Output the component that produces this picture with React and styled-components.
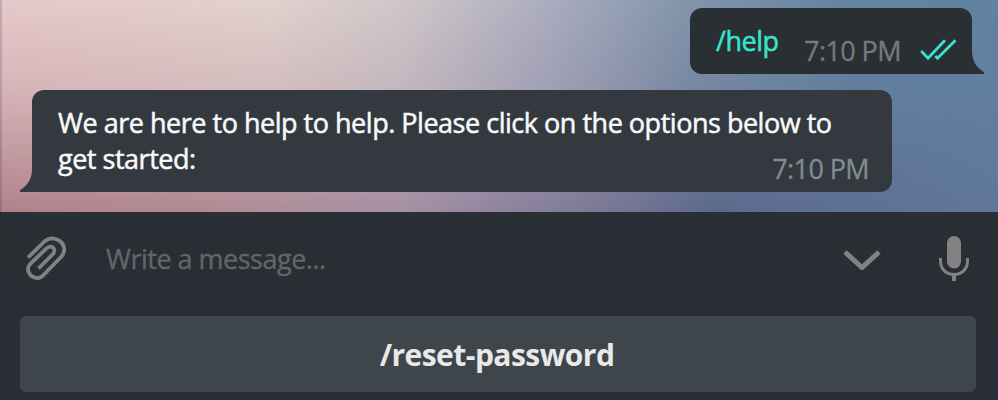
import React from "react";
import styled, { createGlobalStyle } from "styled-components";

const GlobalStyle = createGlobalStyle`
  * { box-sizing: border-box; }
  body {
    margin: 0;
    overflow: hidden;
    background: #292e35;
    font-family: "Open Sans", "Noto Sans", sans-serif;
  }
`;

const Window = styled.main`
  position: relative;
  width: 998px;
  height: 400px;
  display: flex;
  flex-direction: column;
  overflow: hidden;
  &::after {
    content: "";
    position: absolute;
    inset: 0 auto 0 0;
    width: 2px;
    background: rgba(30, 35, 35, 0.17);
  }
`;

const Conversation = styled.section`
  position: relative;
  isolation: isolate;
  height: 212px;
  padding: 8px 26px 0 32px;
  display: flex;
  flex-direction: column;
  gap: 16px;
  border-bottom: 2px solid rgba(50, 60, 85, 0.14);
  background: linear-gradient(90deg, #e7c9cb 0, #e2d2ce 270px, #d0c7c9 400px, #abadbf 550px, #8496ac 680px, #6484a2 850px, #6283a0 998px) border-box;
  &::before {
    content: "";
    position: absolute;
    inset: 0 0 -2px;
    z-index: -1;
    background: linear-gradient(90deg, #b0828a 0, #b08993 220px, #a58fa3 400px, #807b99 570px, #747392 630px, #5c698c 710px, #60779a 998px);
    mask-image: linear-gradient(180deg, transparent 0, rgba(0, 0, 0, 0.27) 40%, #000 100%);
  }
`;

const Bubble = styled.article`
  position: relative;
  display: flex;
  align-self: ${({ $sent }) => ($sent ? "flex-end" : "flex-start")};
  width: ${({ $sent }) => ($sent ? 282 : 860)}px;
  height: ${({ $sent }) => ($sent ? 66 : 102)}px;
  padding: ${({ $sent }) => ($sent ? "15px 16px 0 26px" : "15px 23px 0 26px")};
  border-radius: ${({ $sent }) => ($sent ? "12px 12px 0 12px" : "12px 12px 12px 0")};
  background: ${({ $sent }) => ($sent ? "#2a2f33" : "#343940")};
  color: ${({ $sent }) => ($sent ? "#36e5cc" : "#f8f9fa")};
`;

const Tail = styled.svg`
  position: absolute;
  bottom: 0;
  ${({ $sent }) => ($sent ? "right: -12px;" : "left: -12px; transform: scaleX(-1);")}
  width: 13px;
  height: 22px;
  fill: ${({ $sent }) => ($sent ? "#2a2f33" : "#343940")};
`;

const MessageText = styled.p`
  flex: ${({ $grow }) => ($grow ? 1 : "none")};
  margin: 0;
  font-size: 27px;
  line-height: 36px;
  letter-spacing: -0.48px;
  white-space: nowrap;
  -webkit-text-stroke: 0.5px currentColor;
`;

const Time = styled.time`
  align-self: flex-start;
  margin: ${({ $sent }) => ($sent ? "10px 0 0 25.5px" : "46px 0 0")};
  color: ${({ $sent }) => ($sent ? "#727b82" : "#818c93")};
  font-size: 27px;
  line-height: 36px;
  letter-spacing: -0.6px;
  white-space: nowrap;
  -webkit-text-stroke: 0.3px currentColor;
`;

const ReadMark = styled.svg`
  width: 37px;
  height: 22px;
  margin: 16px -1px 0 auto;
  fill: none;
  stroke: #36e5cc;
  stroke-width: 2.8;
`;

const Composer = styled.footer`
  height: 188px;
  padding: 0 22px 0 20px;
  background: linear-gradient(#292f34, #292d36);
`;

const InputRow = styled.div`
  height: 104px;
  padding: 0 6px 10px 6px;
  display: flex;
  align-items: center;
  color: #828282;
`;

const Placeholder = styled.div`
  flex: 1;
  margin: 0 0 0 38px;
  color: #636669;
  font-size: 27px;
  line-height: 36px;
  letter-spacing: -0.5px;
  -webkit-text-stroke: 0.3px currentColor;
`;

const Icon = styled.svg`
  flex: none;
  fill: none;
  stroke: currentColor;
  margin-right: ${({ $gap }) => $gap || 0}px;
`;

const CommandButton = styled.button`
  display: flex;
  align-items: center;
  justify-content: center;
  width: 956px;
  height: 76px;
  padding: 2px 2px 0 0;
  border: 0;
  border-radius: 6px;
  background: #3e454b;
  color: #e9e9e9;
  font: 700 30px/40px "Open Sans", "Noto Sans", sans-serif;
  letter-spacing: -0.54px;
`;

function BubbleTail({ sent }) {
  return (
    <Tail $sent={sent} viewBox="0 0 13 22" aria-hidden="true">
      <path d="M0 0H1C1.3 8 4.5 15 13 20.3V22H0Z" />
    </Tail>
  );
}

export default function App() {
  return (
    <>
      <GlobalStyle />
      <Window>
        <Conversation>
          <Bubble $sent>
            <MessageText>/help</MessageText>
            <Time $sent>7:10 PM</Time>
            <ReadMark viewBox="0 0 37 22">
              <path d="M1.2 12 8 19.2 25 1.3M15.3 17l2.2 2.2L35.5 1.3" />
            </ReadMark>
            <BubbleTail sent />
          </Bubble>
          <Bubble>
            <MessageText $grow>
              We are here to help to help. Please click on the options below to
              <br />
              get started:
            </MessageText>
            <MessageTime>7:10 PM</MessageTime>
            <BubbleTail />
          </Bubble>
        </Conversation>
        <Composer>
          <InputRow>
            <Icon width="42" height="46" viewBox="0 0 42 46" strokeWidth="3.8">
              <path d="M2 21.5 18.5 5.5C28-3.5 45 9 35.5 20.5L17.5 39C10 47.5-3.5 36.5 4.5 27.5L20.5 12.5C25.5 7.5 31 13.5 27 18L12.5 32.5" />
            </Icon>
            <Placeholder>Write a message...</Placeholder>
            <Icon $gap={57} width="38" height="22" viewBox="0 -1.5 38 22" strokeWidth="5">
              <path d="M2 2.5 19 18 36 2.5" />
            </Icon>
            <Icon width="32" height="46" viewBox="0 0 32 46" strokeWidth="3">
              <rect x="9" y="0" width="14" height="32.5" rx="7" fill="currentColor" stroke="none" />
              <path d="M2.5 22V25C2.5 43 29.5 43 29.5 25V22" />
              <path d="M16 38V45" strokeWidth="4" />
            </Icon>
          </InputRow>
          <CommandButton>/reset-password</CommandButton>
        </Composer>
      </Window>
    </>
  );
}

/* The timestamp shares the last text line without narrowing the message. */
const MessageTime = styled(Time)`
  margin-left: -96px;
`;
